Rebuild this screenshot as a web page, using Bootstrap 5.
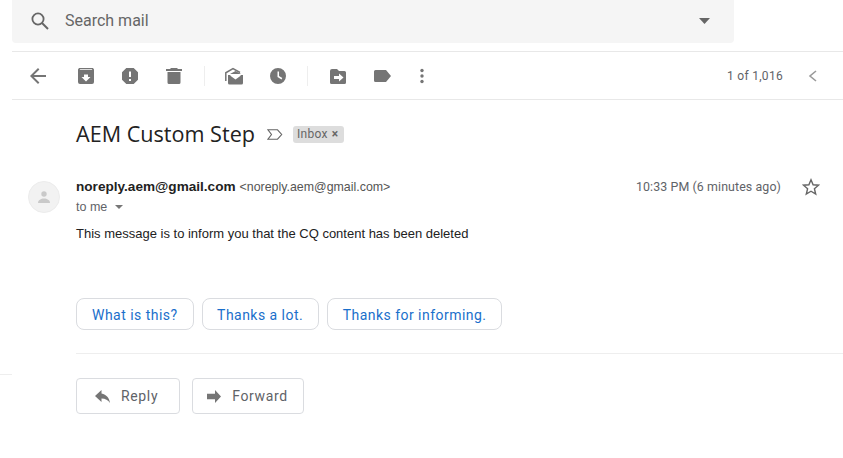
<!DOCTYPE html>
<html lang="en">
<head>
  <meta charset="UTF-8">
  <meta name="viewport" content="width=device-width, initial-scale=1.0">
  <title>AEM Custom Step - Mail</title>
  <link rel="stylesheet" href="https://cdn.jsdelivr.net/npm/bootstrap@5.3.0/dist/css/bootstrap.min.css">
  <style>
    body { font-family: Roboto, sans-serif; color: #222; background: #fff; height: 458px; overflow: hidden; position: relative; }
    .search-wrap { margin-left: 12px; width: 722px; height: 43px; background: #f5f5f5; border-radius: 0 0 4px 4px; padding: 0 24px 2px 18px; }
    .search-label { font-size: 16px; color: #666; margin-left: 15px; flex-grow: 1; }
    .tool-row { margin-top: 8px; margin-left: 12px; height: 49px; border-top: 1px solid #e8e8e8; border-bottom: 1px solid #e8e8e8; padding: 0 26px 0 14px; }
    .tool-row svg { display: block; fill: #757575; }
    .tool-btn { width: 24px; height: 24px; margin-right: 20px; flex: none; }
    .tool-back { margin-right: 24px; }
    .tool-label { margin-right: 16px; }
    .tool-sep { width: 1px; height: 20px; background: #eee; margin-right: 17px; margin-left: -2px; flex: none; }
    .tool-sep-b { margin-left: -3px; margin-right: 18px; }
    .page-count { font-size: 12px; color: #5f6368; margin-left: auto; margin-right: 25px; letter-spacing: .3px; }
    .mail-area { padding-left: 76px; }
    .subject-row { margin-top: 21px; height: 26px; }
    .subject-text { font-family: "Open Sans", sans-serif; font-size: 21.6px; line-height: 26px; color: #222; }
    .label-arrow { margin-left: 12px; }
    .inbox-tag { background: #ddd; color: #666; font-size: 12px; line-height: 16px; height: 17px; padding: 0 6px 0 4px; border-radius: 3px; margin-left: 10px; letter-spacing: .3px; }
    .inbox-tag b { font-size: 12px; margin-left: 4px; }
    .sender-row { margin-top: 31px; position: relative; padding-right: 23px; }
    .avatar-round { position: absolute; left: -48px; top: 3px; width: 32px; height: 32px; border-radius: 50%; background: #f2f2f2; border: 1px solid #ececec; }
    .sender-name { font-family: "Liberation Sans", sans-serif; font-weight: 700; font-size: 13.6px; color: #222; line-height: 16px; }
    .sender-mail { font-family: "Liberation Sans", sans-serif; font-size: 12.4px; color: #555; }
    .time-text { font-size: 12.4px; line-height: 18px; color: #5f6368; margin-left: auto; margin-right: 21px; letter-spacing: .1px; }
    .to-line { font-family: "Liberation Sans", sans-serif; font-size: 12.5px; color: #5f6368; line-height: 16px; margin-top: 2px; }
    .body-text { font-family: "Liberation Sans", sans-serif; font-size: 13px; line-height: 16px; color: #222; margin-top: 11px; }
    .reply-chip { font-size: 14px; color: #1a6fcb; background: #fff; border: 1px solid #dadce0; border-radius: 8px; height: 32px; padding: 2px 15px 0; line-height: 26px; letter-spacing: .47px; }
    .reply-chip-mid { padding: 2px 14.5px 0; }
    .chip-row { margin-top: 56px; gap: 8px; }
    .mail-rule { margin-top: 23px; border-top: 1px solid #eee; }
    .action-row { margin-top: 24px; gap: 12px; }
    .action-btn { font-size: 14px; color: #5f6368; background: #fff; border: 1px solid #dadce0; border-radius: 4px; height: 36px; padding: 2px 21px 0 18px; letter-spacing: .65px; }
    .action-btn svg { fill: #757575; margin-right: 10px; display: block; }
    .action-fwd { padding: 2px 15px 0 14px; }
    .action-fwd svg { margin-right: 11px; }
    .edge-tick { position: absolute; left: 0; top: 374px; width: 12px; height: 1px; background: #eee; }
  </style>
</head>
<body>
  <div class="search-wrap d-flex align-items-center">
    <svg width="20" height="20" viewBox="0 0 20 20"><circle cx="8" cy="8" r="5.600" fill="none" stroke="#666" stroke-width="1.800"/><path d="M12 12l6 6" stroke="#666" stroke-width="2"/></svg>
    <span class="search-label">Search mail</span>
    <svg width="11" height="6" viewBox="0 0 11 6"><path d="M0 0h11L5.500 6z" fill="#666"/></svg>
  </div>

  <div class="tool-row d-flex align-items-center">
    <div class="tool-btn tool-back"><svg width="24" height="24" viewBox="0 0 24 24"><path d="M20 11H7.800l5.600-5.600L12 4l-8 8 8 8 1.400-1.400L7.800 13H20z"/></svg></div>
    <div class="tool-btn"><svg width="24" height="24" viewBox="0 0 24 24"><path d="M5 4h14l1 1.500V18a2 2 0 0 1-2 2H6a2 2 0 0 1-2-2V5.500zM5.600 5.800h12.800l-.6-.8H6.200zM12 17.500l4.500-4.500H14v-2.500h-4V13H7.500z" fill-rule="evenodd"/></svg></div>
    <div class="tool-btn"><svg width="24" height="24" viewBox="0 0 24 24"><path d="M8.300 4h7.400L20 8.300v7.400L15.700 20H8.300L4 15.700V8.300zM11 7.500V13h2V7.500zM11 15v2h2v-2z" fill-rule="evenodd"/></svg></div>
    <div class="tool-btn"><svg width="24" height="24" viewBox="0 0 24 24"><path d="M9 4h6l1 1h4v2H4V5h4zM5.500 8h13v10.500a1.500 1.500 0 0 1-1.500 1.500H7a1.500 1.500 0 0 1-1.500-1.500z"/></svg></div>
    <div class="tool-sep"></div>
    <div class="tool-btn"><svg width="24" height="24" viewBox="0 0 24 24"><path d="M6 11h15v8a1.500 1.500 0 0 1-1.500 1.500h-12A1.500 1.500 0 0 1 6 19zM8 11.500l5.500 4 5.500-4-1-.5H9z" fill-rule="evenodd"/><path d="M3.800 17V8.800L11 4.500l7 4" fill="none" stroke="#757575" stroke-width="1.500"/><path d="M8 10l5.500-3 5.500 3z"/></svg></div>
    <div class="tool-btn"><svg width="24" height="24" viewBox="0 0 24 24"><path d="M12 4a8 8 0 1 1 0 16 8 8 0 0 1 0-16zM11.500 7.500V13l4 2.400.8-1.300-3.300-2V7.500z" fill-rule="evenodd"/></svg></div>
    <div class="tool-sep tool-sep-b"></div>
    <div class="tool-btn"><svg width="24" height="24" viewBox="0 0 24 24"><path d="M6 5h5l2 2h5.500A1.500 1.500 0 0 1 20 8.500v10a1.500 1.500 0 0 1-1.500 1.500h-13A1.500 1.500 0 0 1 4 18.500V7a2 2 0 0 1 2-2zM13 9.500V12H8v3h5v2.500l4.500-4z" fill-rule="evenodd"/></svg></div>
    <div class="tool-btn tool-label"><svg width="24" height="24" viewBox="0 0 24 24"><path d="M5.500 6H16l5 6-5 6H5.500A1.500 1.500 0 0 1 4 16.500v-9A1.500 1.500 0 0 1 5.500 6z"/></svg></div>
    <div class="tool-btn"><svg width="24" height="24" viewBox="0 0 24 24"><circle cx="12" cy="6.500" r="1.700"/><circle cx="12" cy="12" r="1.700"/><circle cx="12" cy="17.500" r="1.700"/></svg></div>
    <span class="page-count">1 of 1,016</span>
    <svg width="9" height="12" viewBox="0 0 9 12"><path d="M8 1L2 6l6 5" fill="none" stroke="#9a9a9a" stroke-width="1.600"/></svg>
  </div>

  <div class="mail-area">
    <div class="subject-row d-flex align-items-center">
      <span class="subject-text">AEM Custom Step</span>
      <svg class="label-arrow" width="16" height="11" viewBox="0 0 16 11"><path d="M1 .8h9.500l4.200 4.700-4.200 4.700H1l3.500-4.700z" fill="none" stroke="#666" stroke-width="1.100"/></svg>
      <span class="inbox-tag d-inline-flex align-items-center">Inbox<b>×</b></span>
    </div>

    <div class="sender-row d-flex align-items-center">
      <div class="avatar-round d-flex align-items-center justify-content-center">
        <svg width="14" height="14" viewBox="0 0 14 14"><circle cx="7" cy="4" r="2.700" fill="#c9c9c9"/><path d="M1 13c0-3 3-4.500 6-4.500s6 1.500 6 4.500z" fill="#c9c9c9"/></svg>
      </div>
      <span class="sender-name">noreply.aem@gmail.com</span>
      <span class="sender-mail ms-1">&lt;noreply.aem@gmail.com&gt;</span>
      <span class="time-text">10:33 PM (6 minutes ago)</span>
      <svg width="18" height="18" viewBox="0 0 18 18"><path d="M9 1.800l2.100 5 5.400.4-4.100 3.500 1.300 5.300L9 13.200 4.300 16l1.300-5.300L1.500 7.200l5.400-.4z" fill="none" stroke="#666" stroke-width="1.400"/></svg>
    </div>
    <div class="to-line">to me <svg class="ms-1" width="8" height="4" viewBox="0 0 8 4"><path d="M0 0h8L4 4z" fill="#777"/></svg></div>
    <div class="body-text">This message is to inform you that the CQ content has been deleted</div>

    <div class="chip-row d-flex">
      <button type="button" class="reply-chip">What is this?</button>
      <button type="button" class="reply-chip reply-chip-mid">Thanks a lot.</button>
      <button type="button" class="reply-chip">Thanks for informing.</button>
    </div>
    <div class="mail-rule"></div>
    <div class="action-row d-flex">
      <button type="button" class="action-btn d-flex align-items-center"><svg width="16" height="14" viewBox="0 0 16 14"><path d="M6.500 3.500V0L0 6l6.500 6V8.500c4 0 6.500 1.500 8.500 4.500-.7-5-3.500-8.500-8.500-9.500z"/></svg>Reply</button>
      <button type="button" class="action-btn action-fwd d-flex align-items-center"><svg width="14" height="13" viewBox="0 0 14 13"><path d="M8 0l6 6.500L8 13V9.300H0V3.700h8z"/></svg>Forward</button>
    </div>
  </div>
  <div class="edge-tick"></div>

  <script src="https://cdn.jsdelivr.net/npm/bootstrap@5.3.0/dist/js/bootstrap.bundle.min.js"></script>
</body>
</html>
